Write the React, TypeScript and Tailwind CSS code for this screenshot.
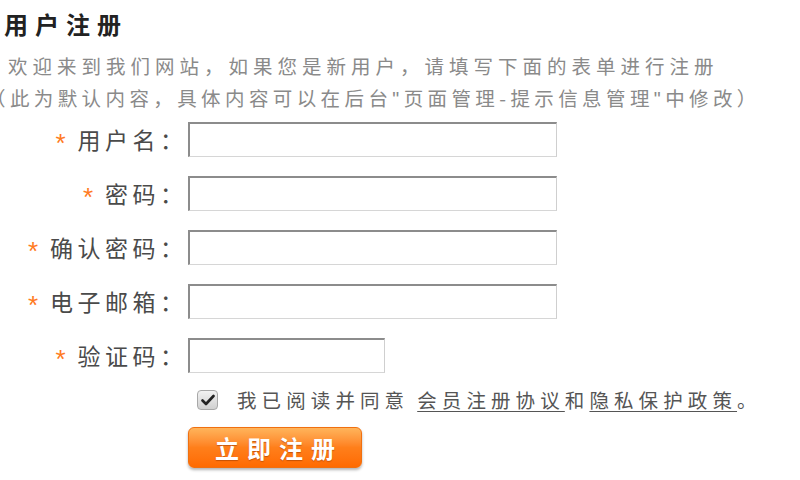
import React from "react";

const font = { fontFamily: '"Noto Sans CJK SC", "Microsoft YaHei", sans-serif' };

function Label({ text }: { text: string }) {
  return (
    <div className="flex items-center justify-end pr-[6px] text-[23px] leading-[35px] text-[#4a4a4a]">
      <span className="mr-[12px] translate-y-[3px] text-[26px] leading-none text-[#ff7a22]" style={{ fontFamily: '"Liberation Sans", sans-serif' }}>*</span>
      <span className="tracking-[4.5px]">{text}</span>
      <span className="w-[22px]">：</span>
    </div>
  );
}

function Field({ w }: { w: string }) {
  return (
    <div className="flex items-center">
      <div
        className={`${w} h-[35px] border-t-2 border-l-2 border-r border-b border-t-[#8c8c8c] border-l-[#8c8c8c] border-r-[#cfcfcf] border-b-[#d6d6d6] bg-white`}
      />
    </div>
  );
}

export default function App() {
  return (
    <div className="w-[800px] h-[480px] overflow-hidden bg-white" style={font}>
      <h1 className="pl-[4px] pt-[8px] text-[24px] leading-[32px] font-bold tracking-[7px] text-[#222]">
        用户注册
      </h1>
      <p className="mt-[10px] pl-[8px] text-[19.5px] leading-[32px] tracking-[5px] text-[#8a8a8a] whitespace-nowrap">
        欢迎来到我们网站，如果您是新用户，请填写下面的表单进行注册
      </p>
      <p className="-ml-[14px] text-[19.5px] leading-[32px] tracking-[4.4px] text-[#8a8a8a] whitespace-nowrap">
        （此为默认内容，具体内容可以在后台<span style={{ fontFamily: '"Liberation Sans", sans-serif' }}>"</span>页面管理-提示信息管理<span style={{ fontFamily: '"Liberation Sans", sans-serif' }}>"</span>中修改）
      </p>
      <div className="mt-[7px] grid grid-cols-[188px_auto] gap-y-[19px]">
        <Label text="用户名" />
        <Field w="w-[369px]" />
        <Label text="密码" />
        <Field w="w-[369px]" />
        <Label text="确认密码" />
        <Field w="w-[369px]" />
        <Label text="电子邮箱" />
        <Field w="w-[369px]" />
        <Label text="验证码" />
        <Field w="w-[197px]" />
        <div className="col-start-2 -mt-[6px] flex items-center text-[19.5px] leading-[28px] text-[#555] whitespace-nowrap">
          <div className="ml-[9px] mr-[19px] flex h-[20px] w-[21px] items-center justify-center rounded-[4px] border border-[#a8a8a8] bg-gradient-to-b from-[#f2f2f2] to-[#d0d0d0]">
            <svg width="14" height="12" viewBox="0 0 14 12">
              <path d="M1.5 6.5 L5 10 L12.5 2" fill="none" stroke="#222" strokeWidth="2.6" strokeLinecap="round" strokeLinejoin="round" />
            </svg>
          </div>
          <span className="tracking-[5.1px]">我已阅读并同意</span>
          <span className="ml-[8px] underline underline-offset-[3px] tracking-[5.1px]">会员注册协议</span>
          <span className="tracking-[5.1px]">和</span>
          <span className="underline underline-offset-[3px] tracking-[5.1px]">隐私保护政策</span>
          <span>。</span>
        </div>
        <div className="col-start-2 -mt-[6px]">
          <button className="h-[41px] w-[174px] rounded-[6px] border border-[#f07010] bg-gradient-to-b from-[#ffb45a] via-[#ff7f1a] to-[#ff6a00] pl-[8px] text-[24px] font-bold tracking-[8px] text-white shadow-[0_2px_3px_rgba(0,0,0,0.3)] [text-shadow:0_1px_1px_rgba(160,60,0,0.6)]">
            立即注册
          </button>
        </div>
      </div>
    </div>
  );
}
